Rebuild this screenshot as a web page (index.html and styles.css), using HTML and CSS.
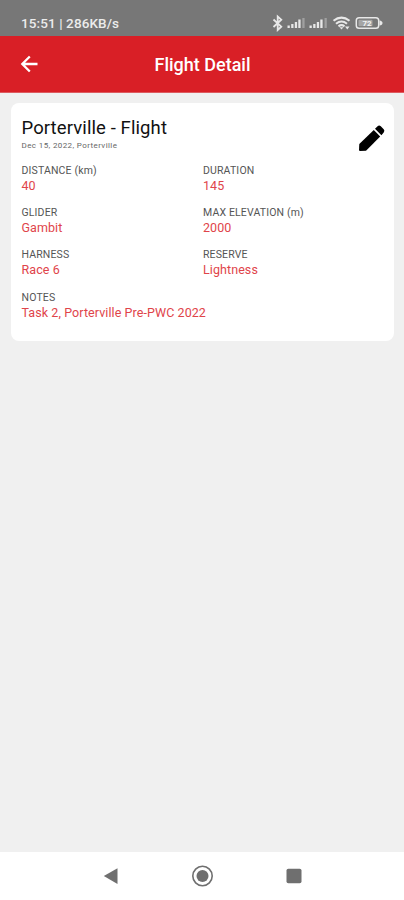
FILE: index.html
```
<!DOCTYPE html>
<html lang="en">

<head>
    <meta charset="UTF-8">
    <meta name="viewport" content="width=device-width, initial-scale=1.0">
    <title>Flight Detail</title>
    <link rel="stylesheet" href="styles.css">
</head>

<body>
    <div class="statusbar">
        <span class="clock">15:51 | 286KB/s</span>
        <svg class="status-icons" width="112" height="18" viewBox="272 14 112 18">
            <path class="bt" d="M273.500 19.500L281.300 26.700L277.700 30V16.500L281.300 19.700L273.500 27" />
            <g class="signal">
                <path d="M287.500 25.500h2.300v2.500h-2.300zM291.200 24h2.300v4h-2.300zM294.800 22h2.300v6h-2.300zM298.300 19.500h2.300v8.500h-2.300z" />
                <path class="off" d="M302.300 18h2.300v10h-2.300z" />
                <path d="M309.500 25.500h2.300v2.500h-2.300zM313.200 24h2.300v4h-2.300zM316.800 22h2.300v6h-2.300zM320.300 19.500h2.300v8.500h-2.300z" />
                <path class="off" d="M324.500 18h2.300v10h-2.300z" />
            </g>
            <path class="wifi" d="M333.500 20.800Q341.500 14.500 349.500 20.800M336 23.700Q341.500 19.300 347 23.700M338.500 26.300Q341.500 24 344.500 26.300" />
            <path class="fill" d="M339.500 27.300h4l-2 2.200zM345 26.500h4.500l-2.200 3z" />
            <rect class="battery" x="356.300" y="17.700" width="22.400" height="10.600" rx="2.800" />
            <rect class="level" x="358.500" y="19.800" width="14" height="6.400" rx="1" />
            <path class="fill" d="M379.500 20.500q3 .5 3 2.500t-3 2.500z" />
            <text x="367" y="26">72</text>
        </svg>
    </div>

    <div class="header">
        <svg class="back" width="24" height="24" viewBox="0 0 24 24">
            <path d="M20.500 12H5.500M12.800 4.500L5.300 12L12.800 19.500" />
        </svg>
        <h1>Flight Detail</h1>
    </div>

    <div class="content">
        <div class="card">
            <div class="card-top">
                <div>
                    <h2>Porterville - Flight</h2>
                    <div class="date">Dec 15, 2022, Porterville</div>
                </div>
                <svg class="edit" width="34" height="34" viewBox="0 0 34 34">
                    <path d="M18.800 9L4.300 23L4 29.200L4.800 30L11 29.700L25.200 15.500z" />
                    <path d="M20 7.800L22.600 5.200q1.600-1.300 3.200.1L28.700 8.200q1.400 1.600 0 3.200L26.400 14.200z" />
                </svg>
            </div>
            <div class="fields">
                <div class="field">
                    <div class="label">DISTANCE (km)</div>
                    <div class="value">40</div>
                </div>
                <div class="field">
                    <div class="label">DURATION</div>
                    <div class="value">145</div>
                </div>
                <div class="field">
                    <div class="label">GLIDER</div>
                    <div class="value">Gambit</div>
                </div>
                <div class="field">
                    <div class="label">MAX ELEVATION (m)</div>
                    <div class="value">2000</div>
                </div>
                <div class="field">
                    <div class="label">HARNESS</div>
                    <div class="value">Race 6</div>
                </div>
                <div class="field">
                    <div class="label">RESERVE</div>
                    <div class="value">Lightness</div>
                </div>
                <div class="field wide">
                    <div class="label">NOTES</div>
                    <div class="value">Task 2, Porterville Pre-PWC 2022</div>
                </div>
            </div>
        </div>
    </div>

    <div class="navbar">
        <svg width="24" height="24" viewBox="0 0 24 24">
            <path d="M4.800 12L18.500 4.300V20z" />
        </svg>
        <svg width="24" height="24" viewBox="0 0 24 24">
            <circle class="ring" cx="11.500" cy="12" r="9.700" />
            <circle cx="11.500" cy="12" r="6" />
        </svg>
        <svg width="24" height="24" viewBox="0 0 24 24">
            <rect x="4.500" y="4.700" width="15" height="14.600" rx="1.800" />
        </svg>
    </div>
</body>

</html>
```
FILE: styles.css
```
* {
    box-sizing: border-box;
}

body {
    margin: 0;
    height: 100vh;
    display: flex;
    flex-direction: column;
    background-color: #f0f0f0;
    font-family: Roboto, sans-serif;
    color: #111;
}

h1,
h2 {
    margin: 0;
}

svg {
    display: block;
}

/* status bar */
.statusbar {
    height: 36px;
    padding: 14px 20px 0 21px;
    display: flex;
    justify-content: space-between;
    background-color: #777;
}

.clock {
    font-size: 13.5px;
    line-height: 18px;
    font-weight: 500;
    letter-spacing: 0.1px;
    color: #ececec;
}

.status-icons .bt,
.status-icons .wifi,
.status-icons .battery {
    fill: none;
    stroke: #e8e8e8;
    stroke-width: 1.5;
}

.status-icons .bt {
    stroke-width: 1.8;
}

.status-icons .wifi {
    stroke-width: 2.1;
}

.signal,
.status-icons .fill {
    fill: #e8e8e8;
}

.signal .off {
    fill: #a0a0a0;
}

.status-icons .level {
    fill: #a5a5a5;
}

.status-icons text {
    font-size: 8px;
    font-weight: 700;
    text-anchor: middle;
    fill: #f4f4f4;
}

/* header */
.header {
    height: 57px;
    padding: 0 16px 0 17px;
    display: grid;
    grid-template-columns: 24px 1fr 24px;
    align-items: center;
    background-color: #d91f26;
    border-bottom: 1px solid #dc5b60;
}

.back path {
    fill: none;
    stroke: #fff;
    stroke-width: 2.3;
}

.header h1 {
    font-size: 18px;
    font-weight: 500;
    text-align: center;
    color: #fff;
}

/* flight card */
.content {
    flex: 1;
    padding: 10px 10px 0 11px;
}

.card {
    height: 238px;
    padding: 12px 5px 0 10.5px;
    background-color: #fff;
    border-radius: 8px;
}

.card-top {
    display: flex;
    justify-content: space-between;
    height: 48px;
}

.card h2 {
    padding-top: 1px;
    font-size: 18.5px;
    line-height: 25px;
    font-weight: 400;
    letter-spacing: 0.1px;
}

.date {
    font-size: 8px;
    line-height: 10px;
    letter-spacing: 0.4px;
    color: #666;
}

.edit {
    margin-top: 6px;
    fill: #000;
}

.fields {
    display: grid;
    grid-template-columns: 181.5px 1fr;
    grid-auto-rows: 42.200px;
}

.wide {
    grid-column: span 2;
}

.label {
    font-size: 10.5px;
    line-height: 15px;
    letter-spacing: 0.15px;
    color: #555;
}

.value {
    font-size: 12.5px;
    line-height: 16px;
    letter-spacing: 0.08px;
    color: #df444a;
}

/* bottom navigation */
.navbar {
    height: 48px;
    padding: 0 98px 0 99px;
    display: flex;
    justify-content: space-between;
    align-items: center;
    background-color: #fff;
    fill: #6f6f6f;
}

.navbar .ring {
    fill: none;
    stroke: #6f6f6f;
    stroke-width: 1.6;
}
```
